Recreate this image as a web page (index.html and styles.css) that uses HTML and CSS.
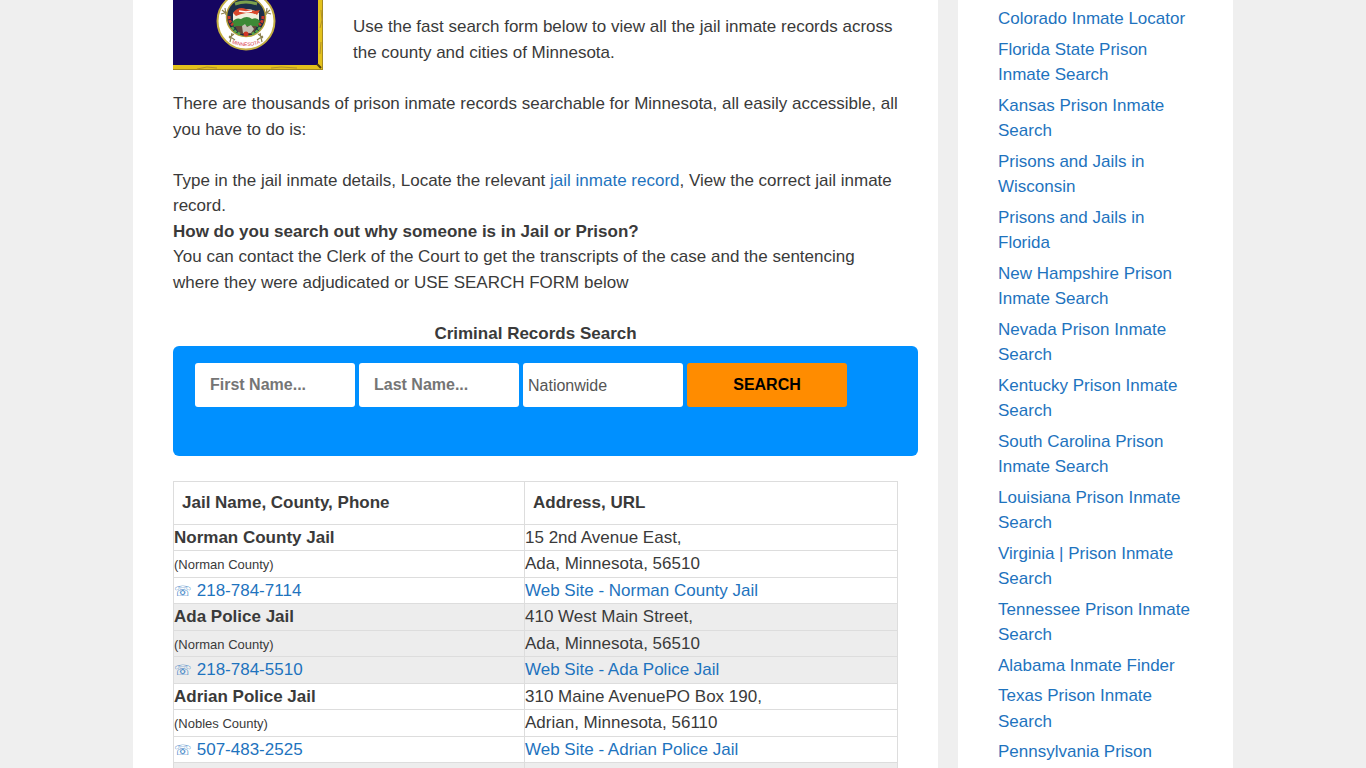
FILE: index.html
```html
<!DOCTYPE html>
<html lang="en">
<head>
    <meta charset="UTF-8">
    <meta name="viewport" content="width=device-width, initial-scale=1.0">
    <title>Minnesota Jail Inmate Search</title>
    <link rel="stylesheet" href="styles.css">
</head>
<body>
    <div class="container">
        <main class="content">
            <div class="intro">
                <svg class="flag" viewBox="0 0 150 70" role="img" aria-label="Minnesota flag">
                    <rect width="150" height="70" fill="#150561"/>
                    <!-- gold fringe -->
                    <path d="M145 0h5v70H0v-5h145z" fill="#e3c11c"/>
                    <path d="M0 69.500h150M149.500 0v70" stroke="#a58a22" stroke-width="1"/>
                    <path d="M24 69l10-2 10 1M98 68l10-1 16 1M148 10l1 10-2 8M148 42l-1 12" fill="none" stroke="#b3922a" stroke-width="1"/>
                    <path d="M144 64l4 4" stroke="#4a3a10" stroke-width="2"/>
                    <!-- seal -->
                    <circle cx="73" cy="21" r="28.500" fill="#fff" stroke="#c3ae42" stroke-width="2"/>
                    <g fill="none" stroke="#8c8250" stroke-width="1.200">
                        <path d="M49 10l6 5M48 14l7-2M52 8l1 7M97 10l-6 5M98 14l-7-2M94 8l-1 7"/>
                        <path d="M56 38l5-4M57 42l2-9M62 40l-6-4M90 38l-5-4M89 42l-2-9M84 40l6-4"/>
                    </g>
                    <circle cx="73" cy="17" r="19.500" fill="#1c2f4a" stroke="#b5a23a" stroke-width="1.500"/>
                    <path d="M60 13q13-8 26 0v10H60z" fill="#f2efdd"/>
                    <path d="M59 22q4-5 9-3 6-4 11 0 5-2 8 2l-2 6H61z" fill="#3d8a36"/>
                    <path d="M62 26h22l-4 8H66z" fill="#5f4a38"/>
                    <path d="M69 26l3-2 2 3 4-2 3 4-3 4h-8z" fill="#c4c0b4"/>
                    <path d="M60 13q5-7 13-4t14 1l-3 5q-5-3-11-2t-10 3z" fill="#d9482c"/>
                    <path d="M66 11l7 1 6-1" fill="none" stroke="#fff" stroke-width="1.500"/>
                    <path d="M56 16q0 6 4 9M90 16q0 6-4 9" fill="none" stroke="#c8372a" stroke-width="3" stroke-dasharray="3 1"/>
                    <path d="M59 27q3 6 9 7M87 27q-3 6-9 7" fill="none" stroke="#56a548" stroke-width="2.500" stroke-dasharray="3 1"/>
                    <circle cx="73" cy="34" r="2.500" fill="#cf3526"/>
                    <path d="M62 4q11-4 22 0" fill="none" stroke="#7ba04d" stroke-width="3"/>
                    <path id="ribbon" d="M58 43q15 6 30 0" fill="none"/>
                    <text class="flag-name"><textPath href="#ribbon" startOffset="50%">MINNESOTA</textPath></text>
                </svg>
                <p>Use the fast search form below to view all the jail inmate records across the county and cities of Minnesota.</p>
            </div>

            <p class="spaced">There are thousands of prison inmate records searchable for Minnesota, all easily accessible, all you have to do is:</p>
            <p>Type in the jail inmate details, Locate the relevant <a href="#">jail inmate record</a>, View the correct jail inmate record.</p>
            <p><strong>How do you search out why someone is in Jail or Prison?</strong></p>
            <p class="spaced">You can contact the Clerk of the Court to get the transcripts of the case and the sentencing where they were adjudicated or USE SEARCH FORM below</p>

            <div class="search">
                <h2 class="search-title">Criminal Records Search</h2>
                <form class="search-form" action="#" method="get">
                    <input type="text" name="first_name" class="search-field" placeholder="First Name..." aria-label="First Name">
                    <input type="text" name="last_name" class="search-field" placeholder="Last Name..." aria-label="Last Name">
                    <select name="state" class="search-field search-select" aria-label="State">
                        <option>Nationwide</option>
                    </select>
                    <button type="submit" class="search-field search-submit">SEARCH</button>
                </form>
            </div>

            <table class="jails">
                <thead>
                    <tr><th class="jails-name">Jail Name, County, Phone</th><th>Address, URL</th></tr>
                </thead>
                <tbody>
                    <tr><td><strong>Norman County Jail</strong></td><td>15 2nd Avenue East,</td></tr>
                    <tr><td><small>(Norman County)</small></td><td>Ada, Minnesota, 56510</td></tr>
                    <tr><td><a href="tel:218-784-7114"><span class="phone">☏</span> 218-784-7114</a></td><td><a href="#">Web Site - Norman County Jail</a></td></tr>
                </tbody>
                <tbody class="shaded">
                    <tr><td><strong>Ada Police Jail</strong></td><td>410 West Main Street,</td></tr>
                    <tr><td><small>(Norman County)</small></td><td>Ada, Minnesota, 56510</td></tr>
                    <tr><td><a href="tel:218-784-5510"><span class="phone">☏</span> 218-784-5510</a></td><td><a href="#">Web Site - Ada Police Jail</a></td></tr>
                </tbody>
                <tbody>
                    <tr><td><strong>Adrian Police Jail</strong></td><td>310 Maine AvenuePO Box 190,</td></tr>
                    <tr><td><small>(Nobles County)</small></td><td>Adrian, Minnesota, 56110</td></tr>
                    <tr><td><a href="tel:507-483-2525"><span class="phone">☏</span> 507-483-2525</a></td><td><a href="#">Web Site - Adrian Police Jail</a></td></tr>
                </tbody>
                <tbody class="shaded">
                    <tr><td>&nbsp;</td><td>&nbsp;</td></tr>
                </tbody>
            </table>
        </main>

        <aside class="sidebar">
            <ul class="sidebar-list">
                <li><a href="#">Colorado Inmate Locator</a></li>
                <li><a href="#">Florida State Prison Inmate Search</a></li>
                <li><a href="#">Kansas Prison Inmate Search</a></li>
                <li><a href="#">Prisons and Jails in Wisconsin</a></li>
                <li><a href="#">Prisons and Jails in Florida</a></li>
                <li><a href="#">New Hampshire Prison Inmate Search</a></li>
                <li><a href="#">Nevada Prison Inmate Search</a></li>
                <li><a href="#">Kentucky Prison Inmate Search</a></li>
                <li><a href="#">South Carolina Prison Inmate Search</a></li>
                <li><a href="#">Louisiana Prison Inmate Search</a></li>
                <li><a href="#">Virginia | Prison Inmate Search</a></li>
                <li><a href="#">Tennessee Prison Inmate Search</a></li>
                <li><a href="#">Alabama Inmate Finder</a></li>
                <li><a href="#">Texas Prison Inmate Search</a></li>
                <li><a href="#">Pennsylvania Prison</a></li>
            </ul>
        </aside>
    </div>
</body>
</html>
```

FILE: styles.css
```css
* {
    box-sizing: border-box;
}

body {
    margin: 0;
    background-color: #efefef;
    color: #3a3a3a;
    font-family: "Liberation Sans", Arial, sans-serif;
    font-size: 17px;
    line-height: 1.5;
}

a {
    color: #1e73be;
    text-decoration: none;
}

a:hover {
    color: #000000;
}

p {
    margin: 0;
}

.container {
    display: flex;
    gap: 20px;
    max-width: 1100px;
    min-height: 100vh;
    margin: 0 auto;
}

.content {
    flex: 1;
    min-width: 0;
    padding: 0 40px;
    background-color: #ffffff;
}

.intro {
    display: flex;
    align-items: flex-start;
    gap: 30px;
    margin-bottom: 21px;
}

.intro p {
    padding-top: 14px;
}

.flag {
    flex: none;
    width: 150px;
    height: 70px;
}

.flag-name {
    fill: #d8343f;
    font-size: 5px;
    text-anchor: middle;
}

.spaced {
    margin-bottom: 1.5em;
}

.search {
    margin: 0 -20px 25px 0;
}

.search-title {
    margin: 0 20px 0 0;
    font-size: 17px;
    text-align: center;
}

.search-form {
    display: flex;
    gap: 4px;
    padding: 17px 22px 49px;
    background-color: #0090ff;
    border-radius: 6px;
}

.search-field {
    flex: 0 1 160px;
    min-width: 0;
    height: 44px;
    padding: 0 15px;
    background-color: #ffffff;
    border: none;
    border-radius: 3px;
    font-family: inherit;
    font-size: 16px;
    font-weight: bold;
}

.search-field::placeholder {
    color: #757575;
}

.search-select {
    appearance: none;
    padding: 0 5px;
    color: #555555;
    font-weight: normal;
}

.search-submit {
    background-color: #ff8c00;
    color: #000000;
    cursor: pointer;
}

.jails {
    width: 100%;
    border: 1px solid #dddddd;
    border-width: 1px 0 0 1px;
    border-collapse: separate;
    border-spacing: 0;
    table-layout: fixed;
}

.jails th,
.jails td {
    padding: 0;
    border: 1px solid #dddddd;
    border-width: 0 1px 1px 0;
    text-align: left;
}

.jails th {
    padding: 8px;
}

.jails-name {
    width: 351px;
}

.jails small {
    font-size: 13px;
}

.phone {
    font-size: 14px;
    line-height: 1;
}

.shaded {
    background-color: #ededed;
}

.sidebar {
    width: 25%;
    padding: 6px 40px 0;
    background-color: #ffffff;
}

.sidebar-list {
    margin: 0;
    padding: 0;
    list-style: none;
}

.sidebar-list li {
    margin-bottom: 5px;
}
```
